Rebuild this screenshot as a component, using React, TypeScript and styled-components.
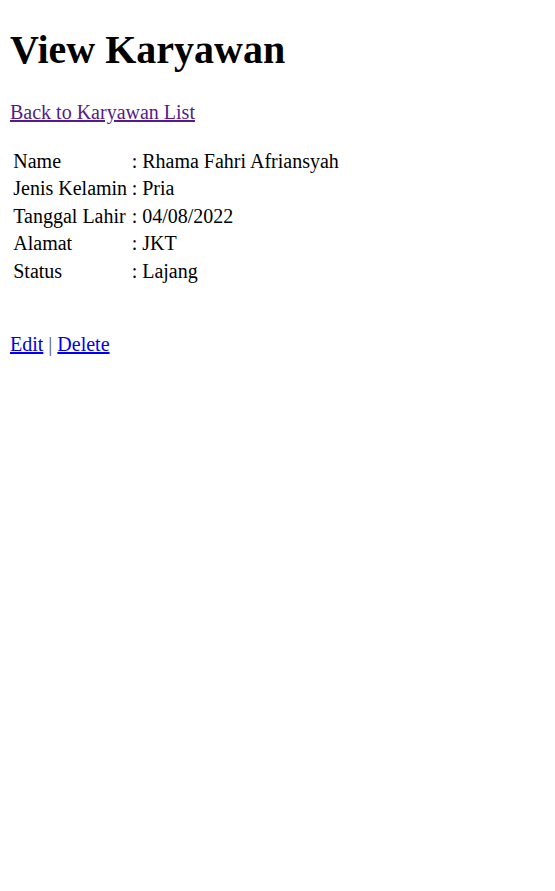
import styled, { createGlobalStyle } from "styled-components";

const Global = createGlobalStyle`
body {
    margin: 10px;
    font-family: "Liberation Serif", "Times New Roman", serif;
    font-size: 20px;
    line-height: 23px;
    color: #000;
    background: #fff;
}
`

const Title = styled.h1`
font-size: 40px;
line-height: 46px;
font-weight: 700;
margin: 17px 0 28px;
`

const Back = styled.a`
color: #551a8b;
text-decoration: underline;
`

const Para = styled.p`
margin: 20px 0 22px;
`

const Info = styled.table`
border-spacing: 2.5px;
margin: 22px 0 0;
`

const Cell = styled.td`
padding: 1.5px 1.25px;
line-height: 22.5px;
white-space: nowrap;
`

const Actions = styled.p`
margin: 47px 0 20px;
`

const ActionLink = styled.a`
color: #0000ee;
text-decoration: underline;
`

const Sep = styled.span`
color: #555;
`

const rows: [string, string][] = [
    ["Name", "Rhama Fahri Afriansyah"],
    ["Jenis Kelamin", "Pria"],
    ["Tanggal Lahir", "04/08/2022"],
    ["Alamat", "JKT"],
    ["Status", "Lajang"],
];

function App() {
    return (
        <>
            <Global />
            <Title>View Karyawan</Title>
            <Para>
                <Back href="#">Back to Karyawan List</Back>
            </Para>
            <Info>
                <tbody>
                    {rows.map(([label, value]) => (
                        <tr key={label}>
                            <Cell>{label}</Cell>
                            <Cell>: {value}</Cell>
                        </tr>
                    ))}
                </tbody>
            </Info>
            <Actions>
                <ActionLink href="#">Edit</ActionLink> <Sep>|</Sep> <ActionLink href="#">Delete</ActionLink>
            </Actions>
        </>
    );
}

export default App;
